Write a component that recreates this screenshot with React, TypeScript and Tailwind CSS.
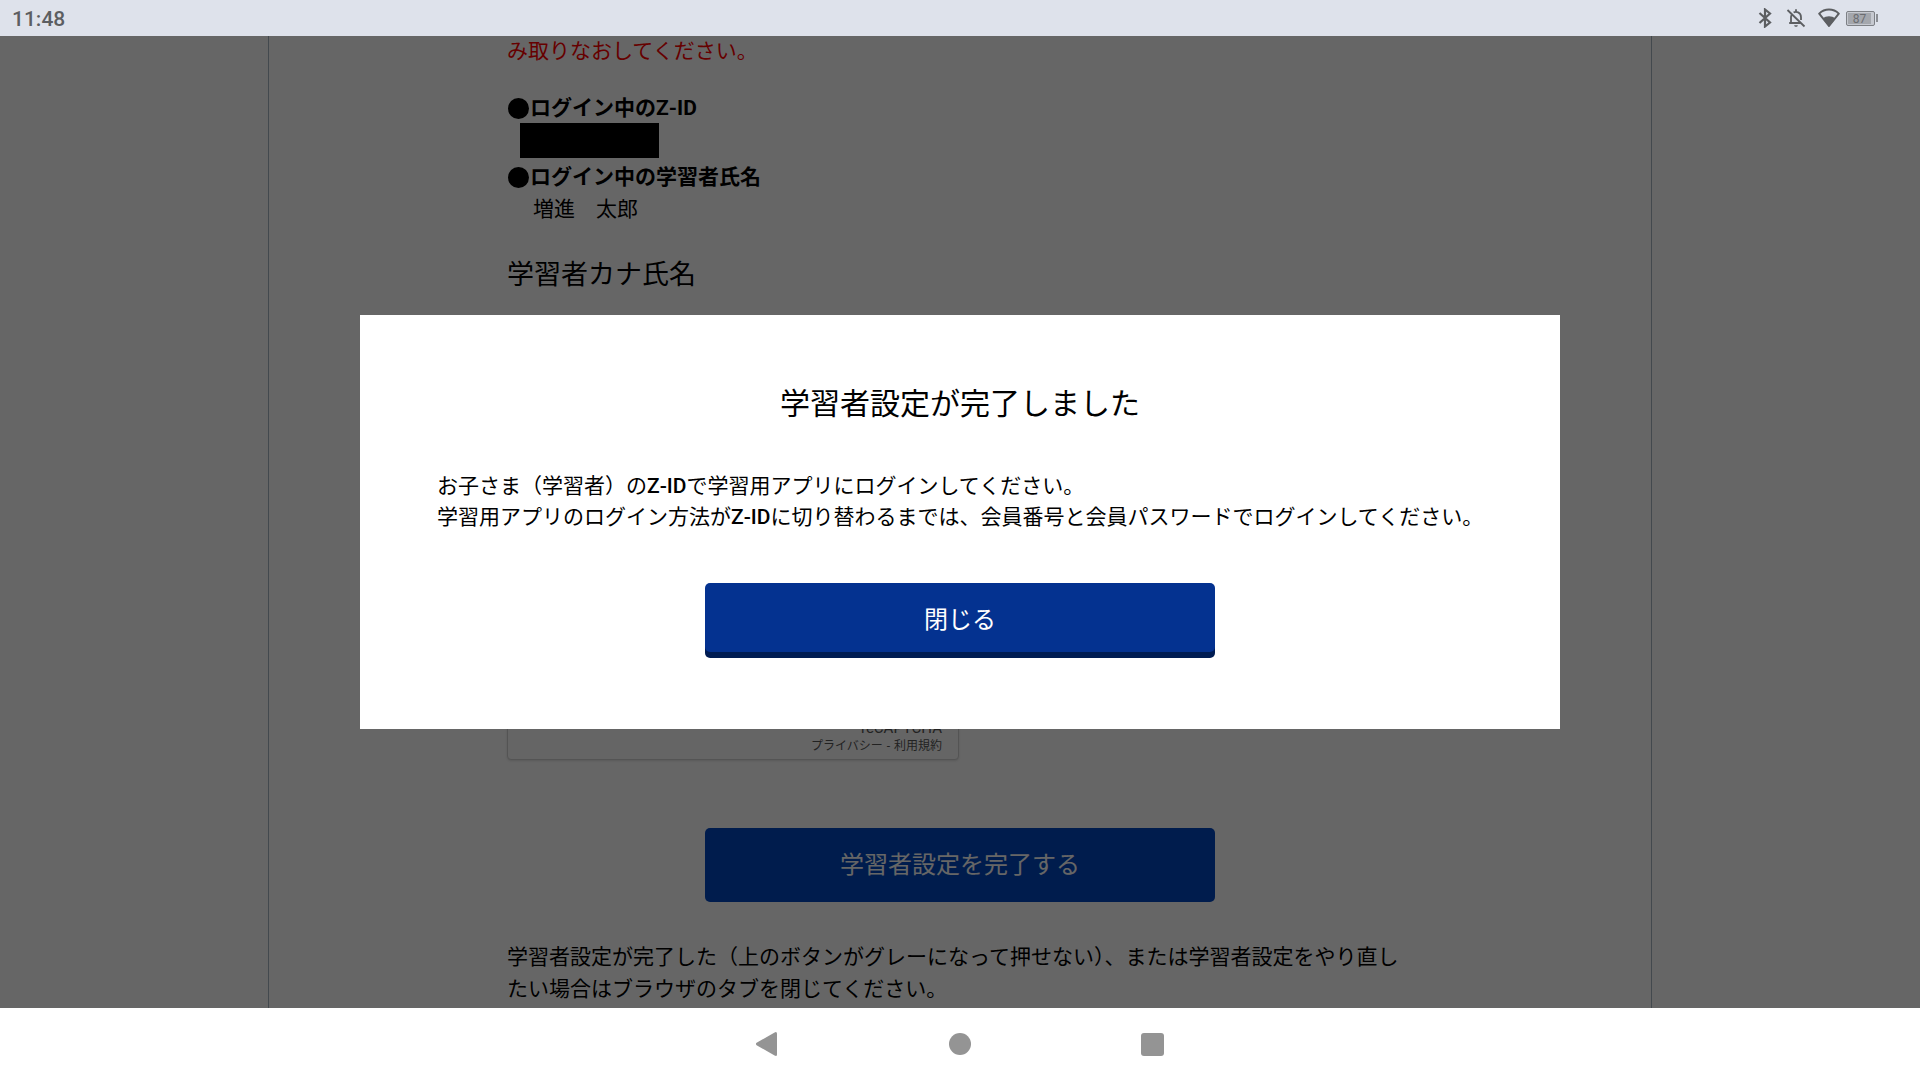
import React from "react";

function StatusBar() {
  return (
    <header className="flex h-9 shrink-0 items-center justify-between bg-[#dee2eb] pl-3 pr-[42px] text-[#5c5e61]">
      <time className="pt-px text-[21px] leading-9 font-medium">11:48</time>
      <div className="flex items-center">
        <svg className="h-5 w-[14px]" viewBox="0 0 14 20" fill="none" stroke="currentColor" strokeWidth="2.2" aria-label="Bluetooth">
          <path d="M1.5 5 12 14.5 7 18.5V1.5L12 5.5 1.5 15" />
        </svg>
        <svg className="ml-3.5 h-5 w-5" viewBox="0 0 20 20" fill="none" stroke="currentColor" strokeWidth="1.8" aria-label="通知オフ">
          <path d="M1.5 2 18.5 18.5" />
          <path d="M5.6 6.8C5.2 7.6 5 8.4 5 9.3V14.6M3.2 15H14.6M7.6 4.6C9.8 3.2 15 4 15 9.3V12M10 1.2V4" />
          <path d="M8.2 17.2H11.8C11.8 19.4 8.2 19.4 8.2 17.2Z" fill="currentColor" stroke="none" />
        </svg>
        <svg className="ml-3 h-5 w-[22px]" viewBox="0 0 22 20" aria-label="Wi-Fi">
          <path d="M11 18 1.2 5.6C6.6 .2 15.4 .2 20.8 5.6Z" fill="none" stroke="currentColor" strokeWidth="2" strokeLinejoin="round" />
          <path d="M11 18.8 4.6 10.6C8.2 7.6 13.8 7.6 17.4 10.6Z" fill="currentColor" />
        </svg>
        <div className="ml-1.5 flex items-center">
          <div className="flex h-[15px] w-[29px] rounded-[2px] border border-[#7d8085] bg-[#c6c9d0] p-px">
            <span className="w-[23px] bg-[#a4a7ad] text-center text-[12px] leading-[12px] text-[#6b6d71]">87</span>
          </div>
          <div className="ml-px h-2 w-0.5 bg-[#8b8e93]" />
        </div>
      </div>
    </header>
  );
}

function LearnerPage() {
  return (
    <div className="mx-auto min-h-full w-[1384px] max-w-full border-x border-[#a8b6c2] bg-white text-[21px] leading-8 text-black">
      <div className="mx-auto w-full max-w-[906px] pt-px">
        <p className="leading-7 text-[#ff0000]">み取りなおしてください。</p>
        <h2 className="mt-[27px] flex items-center font-bold">
          <span className="mx-px size-[21px] rounded-full bg-black" />
          ログイン中のZ-ID
        </h2>
        <div className="-mt-px ml-[13px] h-[35px] w-[139px] bg-black" />
        <h2 className="mt-[3px] flex items-center font-bold">
          <span className="mx-px size-[21px] rounded-full bg-black" />
          ログイン中の学習者氏名
        </h2>
        <p className="pl-[26px]">増進　太郎</p>
        <h3 className="mt-[30px] text-[27px] leading-10">学習者カナ氏名</h3>
        <div className="mt-[351px] flex h-[114px] w-[452px] flex-col items-end justify-end rounded-[4px] border border-[#d3d3d3] bg-[#fcfcfc] pr-4 pb-[5px] text-[#555] shadow">
          <span className="mb-0.5 text-[15px] leading-4">reCAPTCHA</span>
          <small className="flex gap-1 text-[12px] leading-4">
            <a href="#privacy">プライバシー</a>
            <span>-</span>
            <a href="#terms">利用規約</a>
          </small>
        </div>
        <button type="button" className="mx-auto mt-[68px] block h-[74px] w-[510px] rounded-[5px] bg-[#0046c0] text-[24px] text-white">
          学習者設定を完了する
        </button>
        <p className="mt-[39px]">
          学習者設定が完了した（上のボタンがグレーになって押せない）、または学習者設定をやり直したい場合はブラウザのタブを閉じてください。
        </p>
      </div>
    </div>
  );
}

function CompletionDialog() {
  return (
    <section
      role="dialog"
      aria-labelledby="dialog-title"
      className="w-[62.5vw] bg-white px-[70px] pt-[66px] pb-[71px] text-black"
    >
      <h1 id="dialog-title" className="text-center text-[30px] leading-[45px]">
        学習者設定が完了しました
      </h1>
      <p className="mt-[45px] pl-[7px] text-[21px] leading-[31px]">
        お子さま（学習者）の<span className="font-medium">Z-ID</span>で学習用アプリにログインしてください。
        <br />
        学習用アプリのログイン方法が<span className="font-medium">Z-ID</span>
        に切り替わるまでは、会員番号と会員パスワードでログインしてください。
      </p>
      <button
        type="button"
        className="mx-auto mt-[50px] mb-1.5 block h-[69px] w-[510px] rounded-[5px] bg-[#043290] pt-1 text-[24px] text-white shadow-[0_6px_0_#001c52]"
      >
        閉じる
      </button>
    </section>
  );
}

function NavigationBar() {
  return (
    <nav className="flex h-[72px] shrink-0 items-center justify-center gap-24 bg-white text-[#949494]">
      <button type="button" aria-label="戻る" className="flex w-24 justify-center">
        <svg className="size-6" viewBox="0 0 24 24" fill="currentColor">
          <path d="M.6 10.8 18.6.4Q21 -.6 21 1.6V22.4Q21 24.6 18.6 23.6L.6 13.2Q-.8 12 .6 10.8Z" />
        </svg>
      </button>
      <button type="button" aria-label="ホーム" className="flex w-24 justify-center">
        <span className="size-[22px] rounded-full bg-current" />
      </button>
      <button type="button" aria-label="最近のアプリ" className="flex w-24 justify-center">
        <span className="size-[23px] rounded-[3px] bg-current" />
      </button>
    </nav>
  );
}

export default function App() {
  return (
    <div className="flex h-screen flex-col overflow-hidden font-[Roboto,'Noto_Sans_CJK_JP',sans-serif]">
      <StatusBar />
      <main className="relative flex min-h-0 flex-1 flex-col overflow-hidden bg-white">
        <LearnerPage />
        <div className="absolute inset-0 flex items-center justify-center bg-black/60">
          <CompletionDialog />
        </div>
      </main>
      <NavigationBar />
    </div>
  );
}
